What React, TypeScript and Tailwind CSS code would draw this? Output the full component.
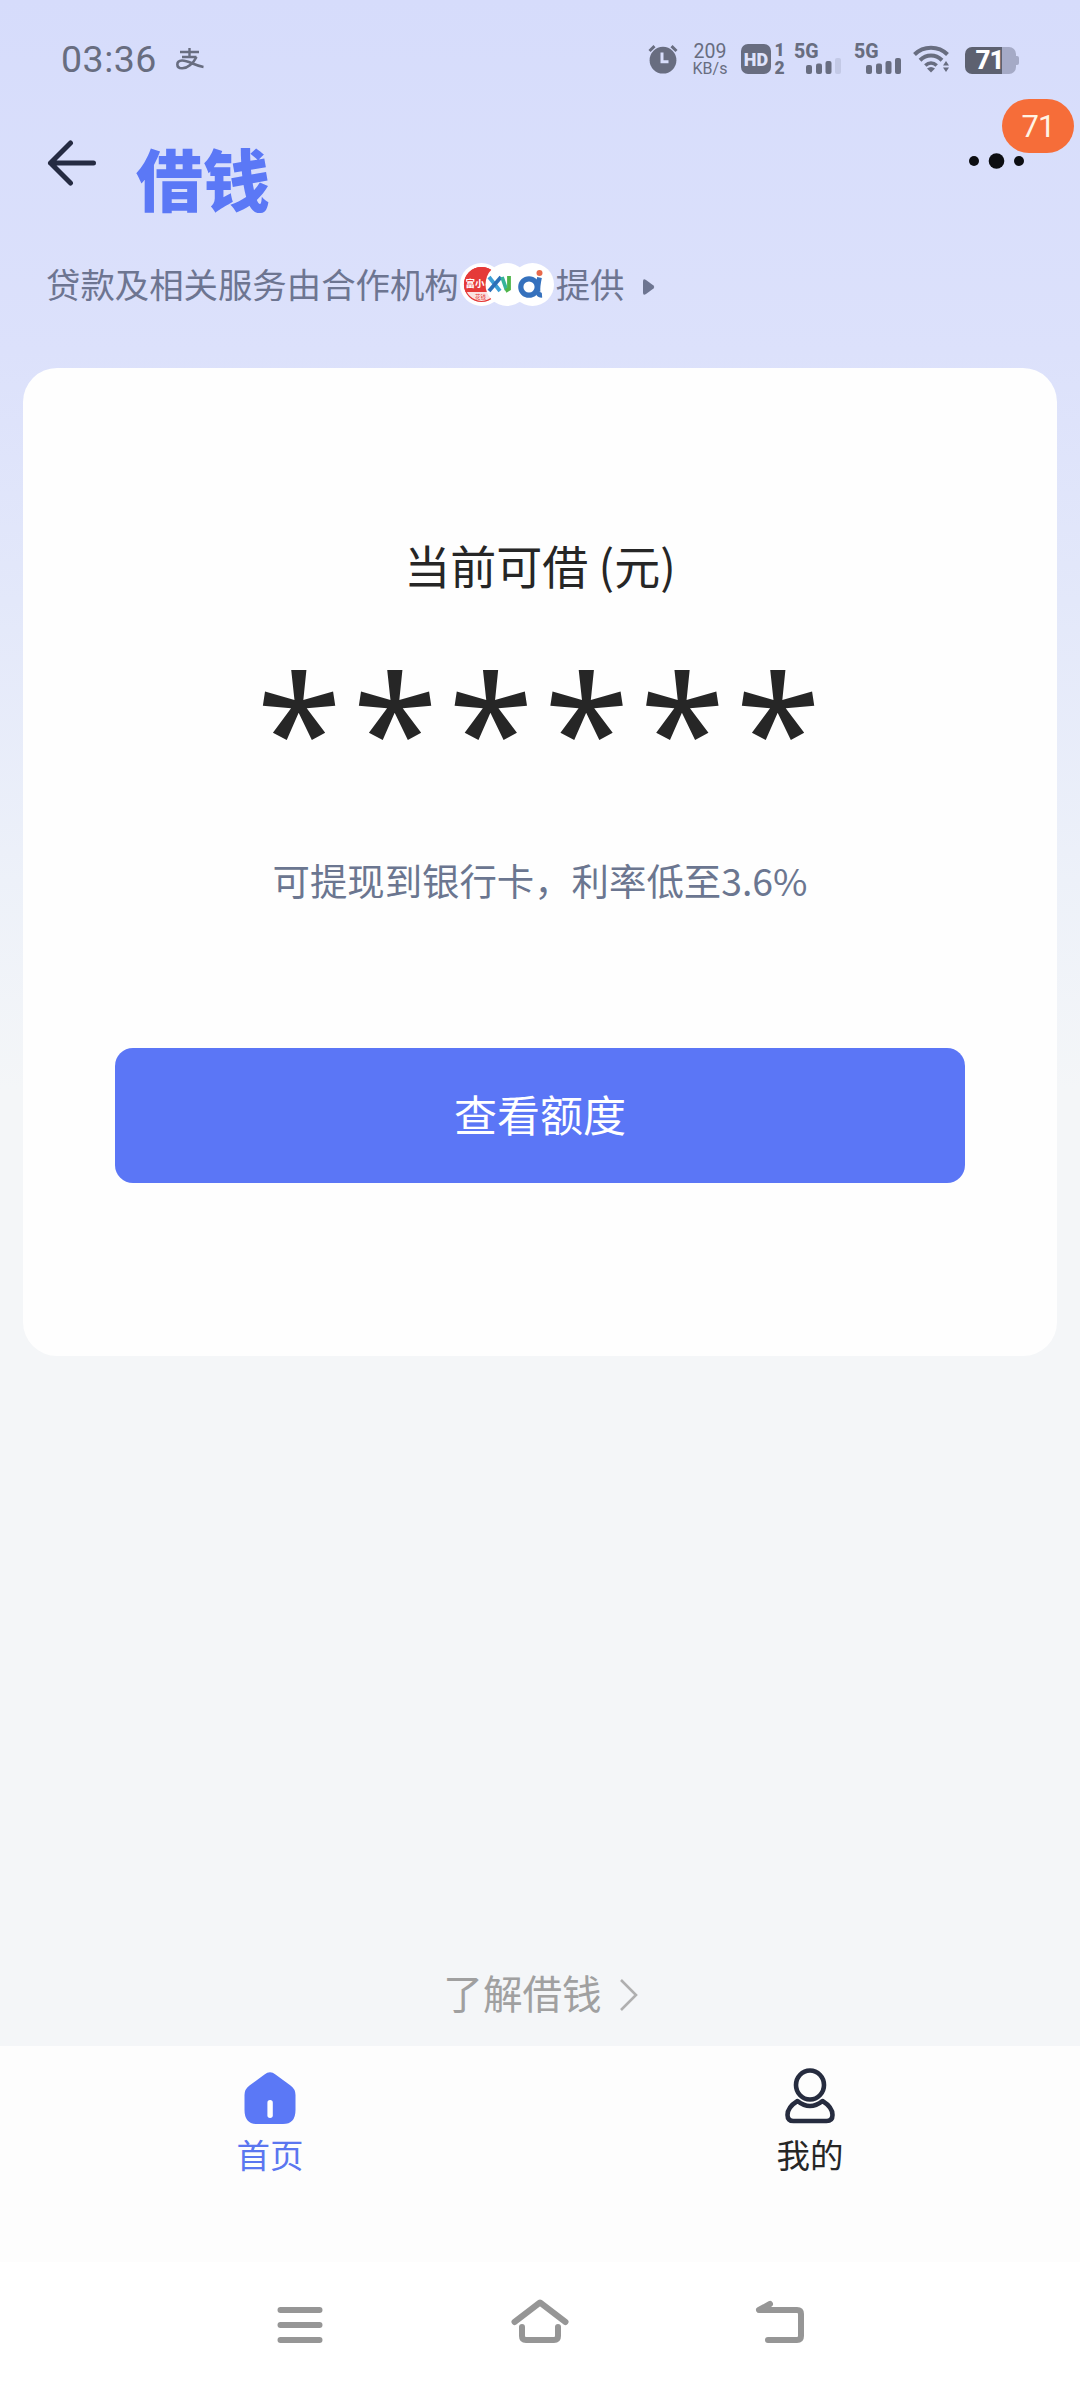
import type { ReactNode } from "react";

const INK = "#686d80";

function AlarmIcon() {
  return (
    <svg width="30" height="30" viewBox="0 0 30 30" fill="none">
      <circle cx="15" cy="16.2" r="13.4" fill={INK} />
      <path d="M1.5 7 6.5 2.2M28.5 7 23.5 2.2" stroke={INK} strokeWidth="3" />
      <path d="M14 8.5v9.2h6.5" stroke="#d8defb" strokeWidth="3" />
    </svg>
  );
}

function SignalIcon({ weak = false }: { weak?: boolean }) {
  return (
    <div className="relative h-[30px] w-[48px] shrink-0">
      <span className="absolute left-0 top-[-2px] font-['Roboto',sans-serif] text-[19.5px] font-extrabold leading-[19px] text-[#686d80]">
        5G
      </span>
      <svg className="absolute left-0 top-0" width="48" height="30" viewBox="0 0 48 30" fill={INK}>
        <rect x="12" y="21" width="6" height="9" rx="2" />
        <rect x="22" y="19.5" width="6" height="10.5" rx="2" />
        <rect x="31.5" y="17" width="6" height="13" rx="2" />
        <rect x="41" y="14" width="6" height="16" rx="2" fill={weak ? "#c3c9e6" : INK} />
      </svg>
    </div>
  );
}

function WifiIcon() {
  return (
    <svg width="37" height="28" viewBox="0 0 37 28" fill="none">
      <path d="M1.5 9.5C10.5 .5 25.5 .5 34.5 9.5" stroke={INK} strokeWidth="4" />
      <path d="M7 15.2C13.5 9 22.5 9 29 15.2" stroke={INK} strokeWidth="4" />
      <path d="M12.3 20.5C15.8 17.3 20.2 17.3 23.7 20.5" stroke={INK} strokeWidth="3.6" />
      <path d="M14 23.5Q18 20.5 22 23.5L18 27.5Z" fill={INK} />
      <path d="M30 20.5 33 16l3 4.5zM30 22.5h6L33 27z" fill={INK} />
    </svg>
  );
}

function StatusBar() {
  return (
    <div className="flex h-[120px] items-start pl-[61px] pt-[44px] text-[#686d80]">
      <span className="font-['Roboto',sans-serif] text-[37.5px] leading-[30px] tracking-[0.5px]">03:36</span>
      <svg className="ml-[18px] mt-[4px]" width="30" height="23" viewBox="0 0 30 23" fill="none" stroke={INK}>
        <path d="M5 4h19M7 9h14.5M14.5 0v9" strokeWidth="2.4" />
        <path
          d="M21.5 9C18.5 15 12.5 20.5 7 20.3C.8 20 .8 12.8 7 12.5C13.5 12.3 19 17.5 28.5 19"
          strokeWidth="2.6"
        />
      </svg>

      <div className="ml-auto flex w-[432px] items-start">
        <AlarmIcon />
        <div className="ml-[14px] flex w-[36px] flex-col items-center font-['Roboto',sans-serif]">
          <span className="text-[19.5px] leading-[15px]">209</span>
          <span className="mt-[3px] text-[16px] leading-[14px]">KB/s</span>
        </div>
        <div className="ml-[13px] flex size-[30px] items-center justify-center rounded-[7px] bg-[#686d80] font-['Roboto',sans-serif] text-[18px] font-black text-[#dfe3fb]">
          HD
        </div>
        <div className="ml-[2px] flex w-[13px] flex-col items-center font-['Roboto',sans-serif] text-[17.5px] font-black leading-[12px]">
          <span>1</span>
          <span className="mt-[6px]">2</span>
        </div>
        <div className="ml-[8px] flex gap-[12px]">
          <SignalIcon weak />
          <SignalIcon />
        </div>
        <div className="ml-[11px] mt-[1px]">
          <WifiIcon />
        </div>
        <div className="ml-[15px] mt-[3px] flex items-center">
          <div className="flex h-[27px] w-[51px] items-center justify-center rounded-[7px] bg-[linear-gradient(90deg,#5d6170_0,#5d6170_37px,#a5aac6_37px)] pr-[2px] font-['Roboto',sans-serif] text-[26px] font-extrabold leading-[27px] tracking-[-1px] text-white">
            71
          </div>
          <div className="h-[9px] w-[3px] rounded-r-[2px] bg-[#a5aac6]" />
        </div>
      </div>
    </div>
  );
}

function Header() {
  return (
    <header className="flex h-[114px] items-start pl-[47px]">
      <svg className="mt-[20px]" width="50" height="46" viewBox="0 0 50 46" fill="none">
        <path d="M23.5 3 3.5 23l20 20M3.5 23h43" stroke="#252b42" strokeWidth="5" strokeLinecap="round" strokeLinejoin="round" />
      </svg>
      <h1 className="ml-[39px] mt-[17px] font-['Noto_Sans_CJK_SC',sans-serif] text-[67px] font-black leading-[80px] text-[#5b78f6]">
        借钱
      </h1>
      <div className="relative ml-auto h-full w-[112px]">
        <svg className="mt-[32px]" width="56" height="18" viewBox="0 0 56 18" fill="#0d0e12">
          <circle cx="6" cy="9" r="5" />
          <circle cx="28.5" cy="9" r="7.8" />
          <circle cx="51" cy="9" r="5" />
        </svg>
        <span className="absolute left-[34px] top-[-21px] flex h-[54px] w-[72px] items-center justify-center rounded-[27px] bg-[#f66d39] pt-[2px] font-['Roboto',sans-serif] text-[31px] tracking-[-1px] text-[#fff4e4]">
          71
        </span>
      </div>
    </header>
  );
}

function Partners() {
  return (
    <svg width="94" height="43" viewBox="0 0 94 43">
      <circle cx="21.5" cy="21.5" r="21.5" fill="#fff" />
      <clipPath id="red">
        <circle cx="21.5" cy="21.5" r="17.5" />
      </clipPath>
      <g clipPath="url(#red)">
        <rect x="3" y="3" width="38" height="26" fill="#e53a38" />
        <rect x="3" y="29" width="38" height="12" fill="#fbe3e2" />
        <text x="5.5" y="23.5" fontSize="9.5" fontWeight="bold" fill="#fff" fontFamily="Noto Sans CJK SC">
          富小
        </text>
        <text x="15" y="36" fontSize="5.5" fill="#e53a38" fontFamily="Noto Sans CJK SC">
          花钱
        </text>
      </g>
      <circle cx="21.5" cy="21.5" r="17" fill="none" stroke="#e53a38" strokeWidth="1.2" />
      <circle cx="47" cy="21.5" r="21.5" fill="#fff" />
      <g fill="none" strokeWidth="3.8">
        <path d="M29 14l11 14" stroke="#3d9fd6" />
        <path d="M41 14 29 28" stroke="#2b6fb8" />
        <path d="M42 14l4.5 13" stroke="#36b39a" />
        <path d="M49 13v13l-3.5 2" stroke="#4fb54a" />
      </g>
      <circle cx="72.5" cy="21.5" r="21.5" fill="#fff" />
      <g fill="none" stroke="#3571bd" strokeWidth="5.2">
        <circle cx="69" cy="24" r="8.2" />
        <path d="M79.5 14.5C78.5 19 77.5 24 78 29q.5 3.5 4 3.2" strokeWidth="4.8" />
      </g>
      <circle cx="79.5" cy="10" r="3" fill="#e8694a" />
    </svg>
  );
}

function CreditCard() {
  return (
    <section className="mx-[23px] flex h-[988px] flex-col items-center rounded-[34px] bg-[#fefefe]">
      <h2 className="mt-[163px] text-[46px] leading-[66px] text-[#262626]">当前可借 (元)</h2>
      <p className="mt-[41px] h-[180px] pl-[8px] font-['Noto_Sans',sans-serif] text-[155px] font-normal leading-[180px] tracking-[10.4px] text-[#262626]">
        ******
      </p>
      <p className="mt-[34px] text-[37.4px] leading-[56px] text-[#6b7690]">可提现到银行卡，利率低至3.6%</p>
      <button className="mt-[140px] flex h-[135px] w-[850px] items-center justify-center rounded-[18px] bg-[#5b76f6] pb-[6px] text-[43px] leading-[60px] text-white">
        查看额度
      </button>
    </section>
  );
}

function TabItem({ label, className, children }: { label: string; className: string; children: ReactNode }) {
  return (
    <div className={`flex flex-1 flex-col items-center pt-[21px] ${className}`}>
      {children}
      <span className="mt-[5px] text-[33.5px] leading-[48px]">{label}</span>
    </div>
  );
}

function TabBar() {
  return (
    <nav className="flex h-[216px] bg-[#fdfdfd]">
      <TabItem label="首页" className="text-[#5b76f0]">
        <svg width="52" height="58" viewBox="0 0 52 58">
          <path
            d="M20.5 7.5Q26 3 31.5 7.5L46.5 18.5Q51.5 22 51.5 28V43Q51.5 57 39 57H13Q.5 57 .5 43V28Q.5 22 5.5 18.5Z"
            fill="#5b78f6"
          />
          <rect x="23.4" y="33" width="5.4" height="18" rx="2.7" fill="#fff" />
        </svg>
      </TabItem>
      <TabItem label="我的" className="text-[#262626]">
        <svg width="52" height="58" viewBox="0 0 52 58" fill="none" stroke="#262c3f" strokeWidth="4.6" strokeLinejoin="round">
          <ellipse cx="26" cy="18" rx="14" ry="14.5" />
          <path d="M13.5 34Q26 44 38.5 34C45 38 48.5 43 48.5 48Q48.5 54 42.5 54H9.5Q3.5 54 3.5 48C3.5 43 7 38 13.5 34Z" />
        </svg>
      </TabItem>
    </nav>
  );
}

function SystemBar() {
  return (
    <div className="flex h-[126px] items-start bg-white pl-[274px] pt-[34px]">
      <svg
        width="530"
        height="54"
        viewBox="0 0 530 54"
        fill="none"
        stroke="#969696"
        strokeWidth="6"
        strokeLinecap="round"
        strokeLinejoin="round"
      >
        <path d="M6.5 14h39M6.5 29h39M6.5 44h39" />
        <path d="M240.5 26 266 6.5 291.5 26M248 31v9q0 4 4 4h28q4 0 4-4v-9" />
        <path d="M496 8 485 14h38q4 0 4 4v22q0 4-4 4h-29" />
      </svg>
    </div>
  );
}

export default function App() {
  return (
    <div className="flex h-[2388px] w-[1080px] flex-col overflow-hidden bg-[#f4f6f8] bg-[linear-gradient(180deg,#d6dcfb_0px,#dce1fb_350px,#e3e8fa_600px,#edf1f9_880px,#f4f6f8_1090px)] font-['Noto_Sans_CJK_SC',sans-serif]">
      <StatusBar />
      <Header />
      <div className="flex h-[134px] items-start pl-[46px] pt-[29px] text-[34.4px] leading-[41px] text-[#6d7591]">
        <span>贷款及相关服务由合作机构</span>
        <span className="ml-[1px] mr-[2px] shrink-0">
          <Partners />
        </span>
        <span>提供</span>
        <svg className="ml-[17px] mt-[15px]" width="14" height="18" viewBox="0 0 14 18" fill="#6d7591">
          <path d="M1 3.5Q1 0 4 2L11.5 7.5Q13 9 11.5 10.5L4 16Q1 18 1 14.5Z" />
        </svg>
      </div>
      <CreditCard />
      <div className="flex flex-1 items-end justify-center pb-[24px] pl-[2px] text-[#a0a0a0]">
        <span className="text-[39.6px] leading-[60px]">了解借钱</span>
        <svg className="mb-[10px] ml-[17px]" width="20" height="34" viewBox="0 0 20 34" fill="none">
          <path d="M2 2 17 17 2 32" stroke="#b0b0b0" strokeWidth="2.6" />
        </svg>
      </div>
      <TabBar />
      <SystemBar />
    </div>
  );
}
